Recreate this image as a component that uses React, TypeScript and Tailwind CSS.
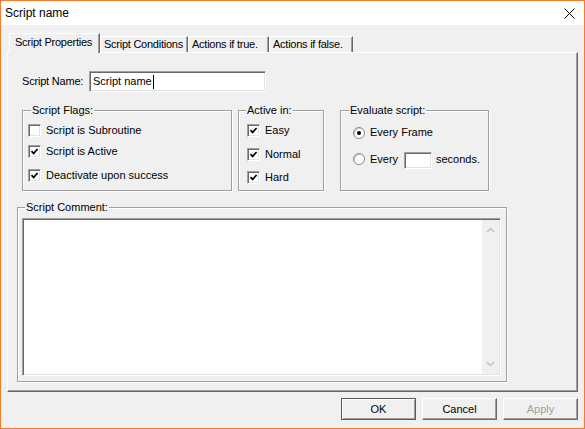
import { ReactNode } from "react"

const raised =
  "border border-t-white border-l-white border-b-[#696969] border-r-[#696969] shadow-[inset_-1px_-1px_0_#a0a0a0]"
const sunken =
  "border border-t-[#a0a0a0] border-l-[#a0a0a0] border-b-white border-r-white shadow-[inset_1px_1px_0_#696969,inset_-1px_-1px_0_#e3e3e3] bg-white"

function Check({ checked }: { checked?: boolean }) {
  return (
    <span className={`flex h-[13px] w-[13px] shrink-0 items-center justify-center ${sunken}`}>
      {checked && (
        <svg width="9" height="9" viewBox="0 0 9 9">
          <path d="M1.5 4.2 L3.6 6.4 L7.6 2" stroke="#000" strokeWidth="1.7" fill="none" />
        </svg>
      )}
    </span>
  )
}

function Radio({ selected }: { selected?: boolean }) {
  return (
    <span className="flex h-[12px] w-[12px] shrink-0 items-center justify-center rounded-full border border-[#8a8a8a] bg-white shadow-[inset_1px_1px_0_#c8c8c8]">
      {selected && <span className="h-[4px] w-[4px] rounded-full bg-black" />}
    </span>
  )
}

function CheckRow({ label, checked, className = "" }: { label: string; checked?: boolean; className?: string }) {
  return (
    <div className={`flex h-[13px] items-center gap-[5px] whitespace-nowrap ${className}`}>
      <Check checked={checked} />
      <span>{label}</span>
    </div>
  )
}

function Group({ label, className, children, labelLeft = "left-[8px]" }: { label: string; className: string; children: ReactNode; labelLeft?: string }) {
  return (
    <div className={`relative border border-[#a0a0a0] shadow-[inset_1px_1px_0_white,1px_1px_0_white] ${className}`}>
      <span className={`absolute -top-[7px] whitespace-nowrap bg-[#f0f0f0] px-[1px] ${labelLeft}`}>{label}</span>
      {children}
    </div>
  )
}

function Chevron({ up }: { up?: boolean }) {
  return (
    <svg width="9" height="6" viewBox="0 0 9 6">
      <path d={up ? "M1 5 L4.5 1.5 L8 5" : "M1 1 L4.5 4.5 L8 1"} stroke="#c4c4c4" strokeWidth="1.6" fill="none" />
    </svg>
  )
}

function Tab({ label, active, width }: { label: string; active?: boolean; width: string }) {
  if (active) {
    return (
      <div className={`relative z-10 -mb-[1px] h-[20px] ${width} overflow-hidden whitespace-nowrap border-t border-l border-r border-t-white border-l-white border-r-[#696969] bg-[#f0f0f0] pl-[5px] pt-[2px] tracking-[-0.25px] shadow-[inset_-1px_0_0_#a0a0a0]`}>
        {label}
      </div>
    )
  }
  return (
    <div className={`h-[16px] ${width} overflow-hidden whitespace-nowrap border-t border-l border-r border-t-white border-l-white border-r-[#696969] pl-[3px] pt-[1px] tracking-[-0.25px] shadow-[inset_-1px_0_0_#a0a0a0]`}>
      {label}
    </div>
  )
}

function Button({ label, primary, disabled }: { label: string; primary?: boolean; disabled?: boolean }) {
  const frame = primary
    ? "border border-[#5a5a5a] shadow-[inset_1px_1px_0_white,inset_-1px_-1px_0_#a0a0a0]"
    : raised
  return (
    <button className={`flex h-[22px] w-[75px] items-center justify-center bg-[#f0f0f0] ${frame} ${disabled ? "text-[#a0a0a0]" : "text-black"}`}>
      {label}
    </button>
  )
}

export default function App() {
  return (
    <div className="flex h-[429px] w-[585px] flex-col border border-[#f47a2c] bg-[#f0f0f0] text-[11px] leading-[13px] text-black [font-family:'Liberation_Sans',Arial,sans-serif]">
      <div className="flex h-[24px] shrink-0 items-center justify-between bg-white pl-[4px]">
        <span className="text-[12px]">Script name</span>
        <svg className="mr-[9px]" width="11" height="11" viewBox="0 0 11 11">
          <path d="M0.5 0.5 L10.5 10.5 M10.5 0.5 L0.5 10.5" stroke="#000" strokeWidth="1" />
        </svg>
      </div>

      <div className="flex flex-col px-[6px] pt-[8px]">
        <div className="flex h-[19px] items-end pl-[2px]">
          <Tab label="Script Properties" active width="w-[91px]" />
          <Tab label="Script Conditions" width="w-[88px]" />
          <Tab label="Actions if true." width="w-[81px]" />
          <Tab label="Actions if false." width="w-[84px]" />
        </div>

        <div className="flex h-[340px] flex-col border border-t-white border-l-white border-b-[#696969] border-r-[#696969] shadow-[inset_-1px_-1px_0_#a0a0a0]">
          <div className="mt-[18px] flex items-center pl-[14px]">
            <span className="w-[67px] tracking-[-0.2px]">Script Name:</span>
            <div className={`flex h-[21px] w-[177px] items-center pl-[3px] ${sunken}`}>
              <span>Script name</span>
              <span className="ml-[1px] h-[14px] w-[1px] bg-black" />
            </div>
          </div>

          <div className="mt-[18px] flex pl-[14px]">
            <Group label="Script Flags:" className="h-[81px] w-[210px] pl-[5px] pt-[13px]">
              <CheckRow label="Script is Subroutine" />
              <CheckRow label="Script is Active" checked className="mt-[8px]" />
              <CheckRow label="Deactivate upon success" checked className="mt-[11px]" />
            </Group>

            <Group label="Active in:" labelLeft="left-[7px]" className="ml-[6px] h-[81px] w-[86px] pl-[8px] pt-[13px]">
              <CheckRow label="Easy" checked />
              <CheckRow label="Normal" checked className="mt-[11px]" />
              <CheckRow label="Hard" checked className="mt-[10px]" />
            </Group>

            <Group label="Evaluate script:" className="ml-[16px] h-[81px] w-[149px] pl-[12px] pt-[15px]">
              <div className="flex h-[13px] items-center gap-[5px]">
                <Radio selected />
                <span>Every Frame</span>
              </div>
              <div className="mt-[10px] flex h-[20px] items-center">
                <Radio />
                <span className="ml-[5px] w-[34px]">Every</span>
                <div className={`h-[17px] w-[28px] self-end ${sunken}`} />
                <span className="ml-[4px]">seconds.</span>
              </div>
            </Group>
          </div>

          <Group label="Script Comment:" labelLeft="left-[7px]" className="ml-[9px] mt-[16px] h-[175px] w-[490px] pl-[4px] pt-[10px]">
            <div className={`flex h-[158px] w-[479px] justify-end p-[1px] ${sunken}`}>
              <div className="flex w-[17px] flex-col items-center justify-between bg-[#f0f0f0] py-[7px]">
                <Chevron up />
                <Chevron />
              </div>
            </div>
          </Group>
        </div>

        <div className="mt-[6px] flex justify-end gap-[6px]">
          <Button label="OK" primary />
          <Button label="Cancel" />
          <Button label="Apply" disabled />
        </div>
      </div>
    </div>
  )
}
